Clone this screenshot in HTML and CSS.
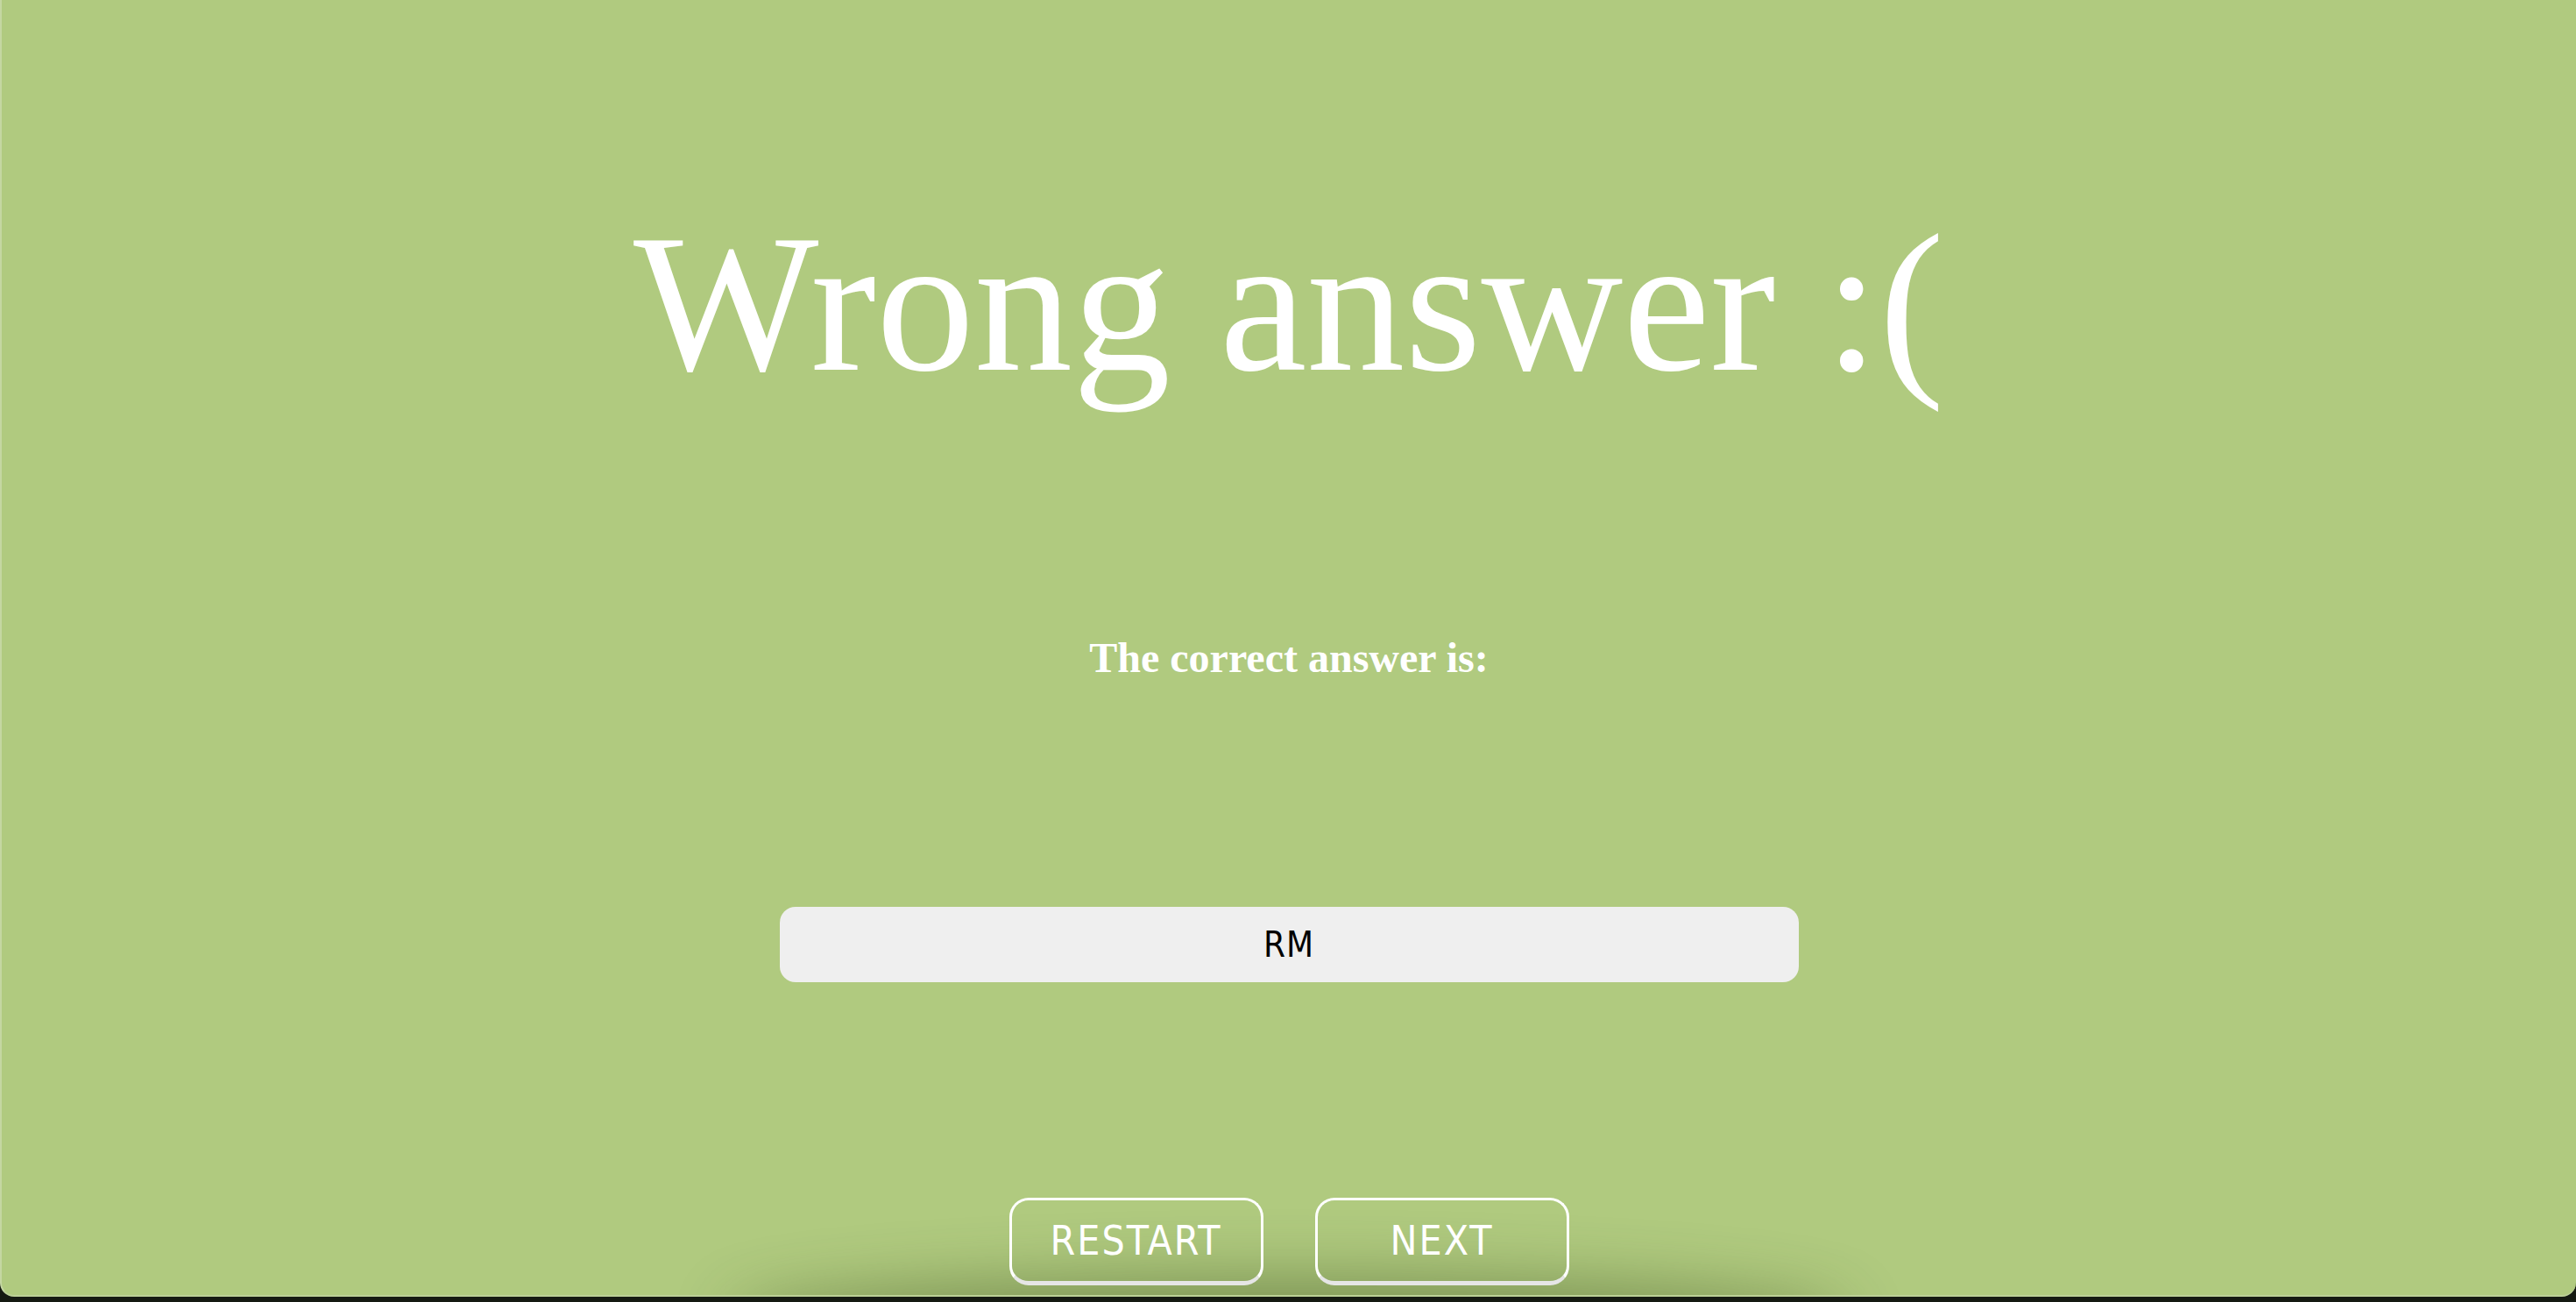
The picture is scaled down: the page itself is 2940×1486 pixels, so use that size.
FILE: index.html
```html
<!DOCTYPE html>
<html lang="en">
<head>
<meta charset="utf-8">
<title>Wrong answer</title>
<link rel="stylesheet" href="styles.css">
</head>
<body>
<main class="screen">
  <h1 class="title">Wrong answer :(</h1>
  <h2 class="subtitle">The correct answer is:</h2>
  <div class="answer">RM</div>
  <div class="actions">
    <button class="btn">RESTART</button>
    <button class="btn">NEXT</button>
  </div>
  <div class="floor-shadow"></div>
</main>
</body>
</html>
```

FILE: styles.css
```css
html, body {
  margin: 0;
  padding: 0;
  background: #151a12;
  height: 1486px;
  overflow: hidden;
}

.screen {
  position: relative;
  box-sizing: border-box;
  height: 1480px;
  background: #b0ca7f;
  border-left: 2px solid #c4d7a2;
  border-bottom: 2px solid #bcd197;
  border-radius: 0 0 16px 16px;
  overflow: hidden;
  display: flex;
  flex-direction: column;
  align-items: center;
  font-family: "Liberation Serif", "Times New Roman", serif;
  color: #ffffff;
}

.title {
  margin: 234px 0 0 0;
  font-size: 224px;
  line-height: 1;
  font-weight: normal;
  white-space: nowrap;
}

.subtitle {
  margin: 269px 0 0 0;
  font-size: 48px;
  line-height: 1;
  font-weight: bold;
}

.answer {
  margin-top: 260px;
  width: 1163px;
  height: 86px;
  border-radius: 18px;
  background: #efefef;
  color: #000;
  display: flex;
  align-items: center;
  justify-content: center;
  font-family: "DejaVu Sans Condensed", "DejaVu Sans", sans-serif;
  font-size: 40px;
  letter-spacing: 1px;
}

.actions {
  margin-top: 246px;
  display: flex;
  gap: 59px;
  position: relative;
  z-index: 1;
}

.btn {
  box-sizing: border-box;
  width: 290px;
  height: 100px;
  background: transparent;
  border: 3px solid #ffffff;
  border-bottom: 5px solid #e6e6e6;
  border-radius: 22px;
  color: #ffffff;
  font-family: "DejaVu Sans Condensed", "DejaVu Sans", sans-serif;
  font-size: 46px;
  letter-spacing: 2px;
  padding: 0;
  display: flex;
  align-items: center;
  justify-content: center;
}

.floor-shadow {
  position: absolute;
  left: 50%;
  bottom: -60px;
  width: 1240px;
  height: 60px;
  margin-left: -620px;
  border-radius: 50%;
  box-shadow: 0 0 70px 20px rgba(60, 80, 30, 0.45);
  background: rgba(60, 80, 30, 0.45);
}
```
